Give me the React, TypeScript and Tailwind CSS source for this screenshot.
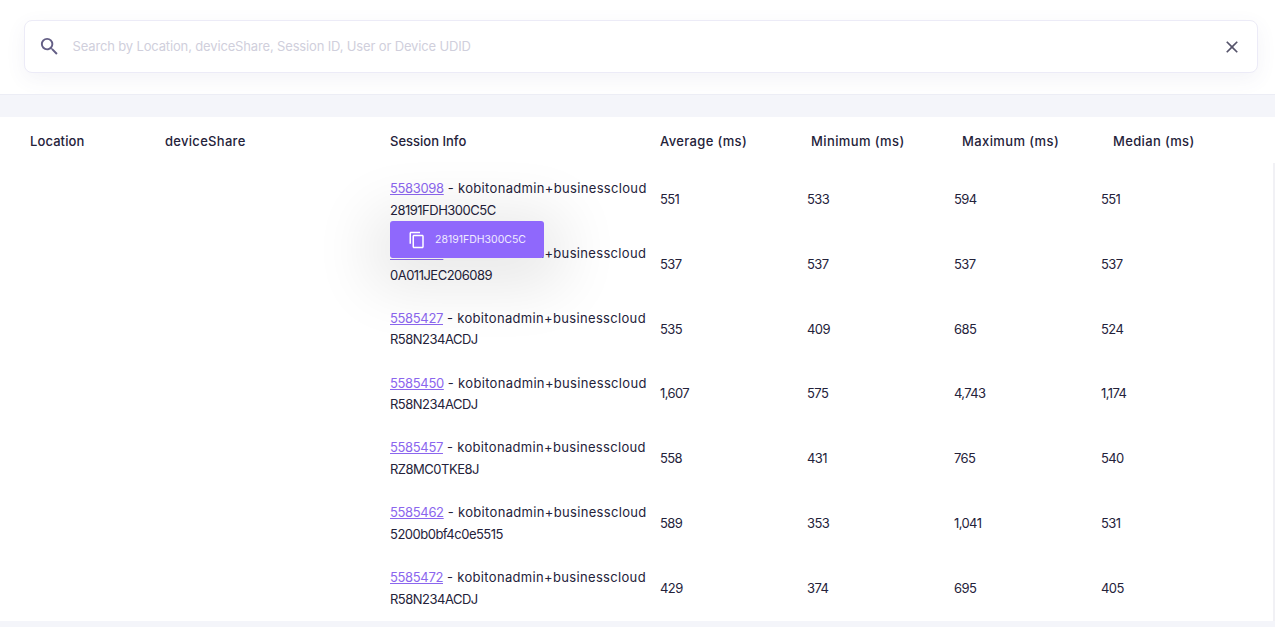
import React from "react";
import { MdSearch, MdClose, MdContentCopy } from "react-icons/md";

const rows = [
  ["5583098", "28191FDH300C5C", "551", "533", "594", "551"],
  ["5585392", "0A011JEC206089", "537", "537", "537", "537"],
  ["5585427", "R58N234ACDJ", "535", "409", "685", "524"],
  ["5585450", "R58N234ACDJ", "1,607", "575", "4,743", "1,174"],
  ["5585457", "RZ8MC0TKE8J", "558", "431", "765", "540"],
  ["5585462", "5200b0bf4c0e5515", "589", "353", "1,041", "531"],
  ["5585472", "R58N234ACDJ", "429", "374", "695", "405"],
];

export default function App() {
  return (
    <div className="w-[1275px] h-[627px] overflow-hidden bg-white text-[13px] text-[#24223a] font-['Inter',sans-serif] flex flex-col">
      <div className="h-[94px] shrink-0 px-6 pt-5">
        <div className="h-[53px] w-[1234px] rounded-lg border border-[#ecebf7] bg-white shadow-[0_6px_20px_rgba(80,80,140,0.07)] flex items-center pl-[13px] pr-[15px]">
          <MdSearch size={23} className="text-[#635e85] -ml-[0.5px]" />
          <span className="ml-3 flex-1 text-[#d0cfdc] tracking-[-0.15px]">Search by Location, deviceShare, Session ID, User or Device UDID</span>
          <MdClose size={20} className="text-[#55536a]" />
        </div>
      </div>
      <div className="h-[23px] shrink-0 bg-[#f4f5fa] border-t border-[#ecedf5]" />
      <div className="h-[50px] shrink-0 flex items-center font-medium">
        <div className="w-[165px] pl-[30px] tracking-[0.1px]">Location</div>
        <div className="w-[225px] tracking-[0.3px]">deviceShare</div>
        <div className="w-[270px]">Session Info</div>
        <div className="w-[151px] tracking-[0.35px]">Average (ms)</div>
        <div className="w-[151px] tracking-[0.4px]">Minimum (ms)</div>
        <div className="w-[151px] tracking-[0.4px]">Maximum (ms)</div>
        <div className="tracking-[0.35px]">Median (ms)</div>
      </div>
      <div className="relative h-[458px] shrink-0 border-r-2 border-[#f1f1f5] mt-[-4px] pt-[4.4px]">
        {rows.map((r) => (
          <div key={r[0]} className="h-[64.8px] flex items-center pl-[390px]">
            <div className="w-[270px] leading-[21.6px]">
              <div className="whitespace-nowrap">
                <span className="text-[#8b66ee] underline tracking-[-0.35px]">{r[0]}</span>
                <span className="tracking-[0.33px]"> - kobitonadmin+businesscloud</span>
              </div>
              <div className="tracking-[-0.5px]">{r[1]}</div>
            </div>
            <div className="w-[147px] tracking-[-0.6px]">{r[2]}</div>
            <div className="w-[147px] tracking-[-0.6px]">{r[3]}</div>
            <div className="w-[147px] tracking-[-0.6px]">{r[4]}</div>
            <div className="tracking-[-0.6px]">{r[5]}</div>
          </div>
        ))}
        <div className="absolute left-[390px] top-[58px] w-[154px] h-[37px] rounded-[3px] bg-[#8f68fc] text-white shadow-[0_10px_60px_20px_rgba(0,0,0,0.09)] flex items-center pl-[18px]">
          <MdContentCopy size={18} />
          <span className="ml-[9px] text-[10.5px] text-[#f0ebff]">28191FDH300C5C</span>
        </div>
      </div>
      <div className="flex-1 bg-[#f4f5fa]" />
    </div>
  );
}
